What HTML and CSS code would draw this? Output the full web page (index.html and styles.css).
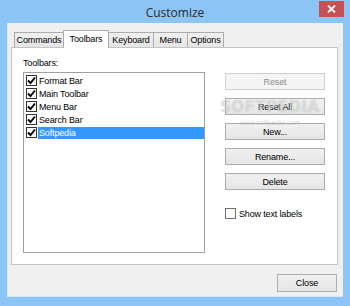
FILE: index.html
```html
<!DOCTYPE html>
<html lang="en">
<head>
    <meta charset="UTF-8">
    <title>Customize</title>
    <link rel="stylesheet" href="styles.css">
</head>
<body>
    <div class="window">
        <div class="titlebar">
            <span class="title">Customize</span>
            <span class="close-x">
                <svg width="9" height="8" viewBox="0 0 9 8"><path d="M1 0.5 L8 7.5 M8 0.5 L1 7.5" stroke="#fff" stroke-width="1.8"/></svg>
            </span>
        </div>
        <div class="client">
            <div class="tabs">
                <span class="tab w-commands">Commands</span>
                <span class="tab active w-toolbars">Toolbars</span>
                <span class="tab w-keyboard">Keyboard</span>
                <span class="tab w-menu">Menu</span>
                <span class="tab w-options">Options</span>
            </div>
            <div class="panel">
                <div class="list-col">
                    <div class="label">Toolbars:</div>
                    <ul class="list">
                        <li><span class="check on"></span><span class="item">Format Bar</span></li>
                        <li><span class="check on"></span><span class="item">Main Toolbar</span></li>
                        <li><span class="check on"></span><span class="item">Menu Bar</span></li>
                        <li><span class="check on"></span><span class="item">Search Bar</span></li>
                        <li><span class="check on"></span><span class="item selected">Softpedia</span></li>
                    </ul>
                </div>
                <div class="btn-col">
                    <button class="btn" disabled>Reset</button>
                    <button class="btn">Reset All</button>
                    <button class="btn">New...</button>
                    <button class="btn">Rename...</button>
                    <button class="btn">Delete</button>
                    <label class="option"><span class="check plain"></span>Show text labels</label>
                </div>
                <div class="watermark">SOFTPEDIA<small>www.softpedia.com</small></div>
            </div>
            <div class="footer">
                <button class="btn close-btn">Close</button>
            </div>
        </div>
    </div>
</body>
</html>
```

FILE: styles.css
```css
body {
    margin: 0;
    background: #8cc4f5;
    font-family: "Liberation Sans", Arial, sans-serif;
    font-size: 9px;
    letter-spacing: -0.15px;
    color: #000;
}
.window {
    width: 350px;
    height: 306px;
    background: #8cc4f5;
}
.titlebar {
    position: relative;
    height: 23px;
    display: flex;
    align-items: center;
    justify-content: center;
}
.title {
    font-family: "Open Sans", sans-serif;
    font-size: 12px;
    letter-spacing: 0;
    color: #2b2b2b;
    margin-top: 2px;
}
.close-x {
    position: absolute;
    left: 319px;
    top: 1px;
    width: 25px;
    height: 16px;
    background: #c75050;
    display: flex;
    align-items: center;
    justify-content: center;
}
.client {
    box-sizing: border-box;
    margin-left: 7px;
    width: 336px;
    height: 274px;
    background: #f0f0f0;
    border-left: 1px solid #d4e8fb;
    border-bottom: 1px solid #d4e8fb;
    padding: 7px 0 0 3px;
}
.tabs {
    display: flex;
    align-items: flex-end;
    height: 17px;
    padding-left: 3px;
}
.tab {
    box-sizing: border-box;
    height: 15px;
    margin-right: -1px;
    border: 1px solid #acacac;
    border-bottom: none;
    background: linear-gradient(#f0f0f0, #e5e5e5);
    display: flex;
    align-items: center;
    justify-content: center;
}
.tab.active {
    position: relative;
    z-index: 1;
    height: 18px;
    margin-bottom: -1px;
    background: #fff;
    padding-bottom: 2px;
}
.w-commands { width: 50px; }
.w-toolbars { width: 46px; }
.w-keyboard { width: 46px; }
.w-menu { width: 35px; }
.w-options { width: 37px; }
.panel {
    position: relative;
    box-sizing: border-box;
    width: 327px;
    height: 218px;
    background: #fff;
    border: 1px solid #c4c4c4;
    padding: 9px 0 0 11px;
    display: flex;
    gap: 20px;
}
.label {
    height: 13px;
    line-height: 13px;
    margin-bottom: 2px;
}
.list {
    box-sizing: border-box;
    width: 182px;
    height: 181px;
    margin: 0;
    padding: 1px 0 0;
    list-style: none;
    border: 1px solid #a0a0a0;
}
.list li {
    height: 13px;
    display: flex;
    align-items: center;
    padding-left: 2px;
}
.item {
    flex: 1;
    height: 12px;
    line-height: 12px;
    margin-left: 1px;
    padding-left: 1px;
}
.item.selected {
    background: #3399ff;
    color: #fff;
}
.check {
    box-sizing: border-box;
    width: 11px;
    height: 11px;
    border: 1px solid #333;
    background: #fff;
    flex: none;
}
.check.on {
    background: #fff url("data:image/svg+xml,%3Csvg xmlns='http://www.w3.org/2000/svg' width='9' height='9' viewBox='0 0 9 9'%3E%3Cpath d='M1 4.5 L3.5 7 L8 1.5' fill='none' stroke='%23000' stroke-width='1.9'/%3E%3C/svg%3E") center no-repeat;
}
.check.plain {
    border-color: #6f6f6f;
    margin-right: 3px;
}
.btn-col {
    margin-top: 16px;
    display: flex;
    flex-direction: column;
    gap: 8px;
}
.btn {
    box-sizing: border-box;
    width: 100px;
    height: 17px;
    padding: 0;
    border: 1px solid #acacac;
    background: linear-gradient(#f0f0f0, #e5e5e5);
    font-family: inherit;
    font-size: 9px;
    letter-spacing: -0.15px;
    color: #000;
}
.btn:disabled {
    border-color: #cfcfcf;
    background: #f4f4f4;
    color: #8a8a8a;
}
.option {
    margin-top: 10px;
    display: flex;
    align-items: center;
}
.watermark {
    position: absolute;
    left: 206px;
    top: 50px;
    width: 104px;
    text-align: center;
    font-family: "DejaVu Sans", sans-serif;
    font-weight: bold;
    font-size: 15px;
    letter-spacing: 0.5px;
    color: rgba(255, 255, 255, 0.5);
    text-shadow: 0 0 1px rgba(0, 0, 0, 0.25);
    pointer-events: none;
}
.watermark small {
    display: block;
    margin-top: 3px;
    font-family: "Liberation Sans", sans-serif;
    font-weight: normal;
    font-size: 7px;
    letter-spacing: 0;
    color: rgba(120, 120, 120, 0.3);
    text-shadow: none;
}
.footer {
    width: 327px;
    display: flex;
    justify-content: flex-end;
    padding-top: 9px;
}
.close-btn {
    width: 60px;
    height: 18px;
    margin-right: 1px;
}
```
